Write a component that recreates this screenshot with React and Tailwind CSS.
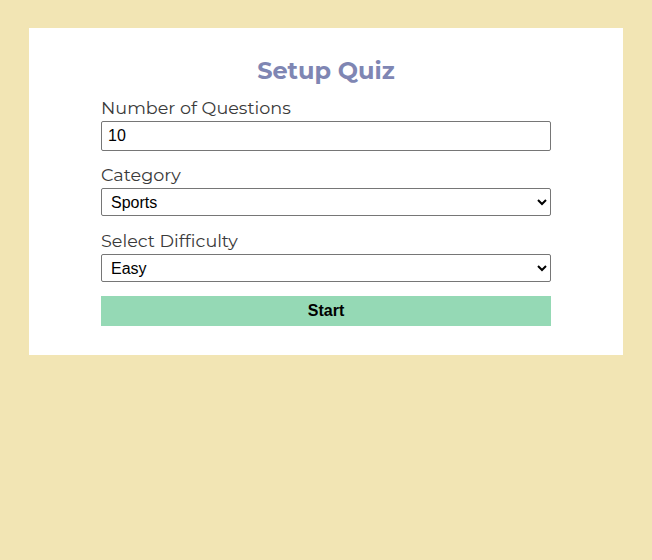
export default function App() {
  const label = "text-[17.6px] leading-[22px] text-[#3a3a3a] font-['Montserrat','Open_Sans',sans-serif]";
  const field = "mt-[2px] w-full border border-[#767676] rounded-[2px] text-[16px] text-black bg-white font-['Liberation_Sans',Arial,sans-serif]";
  return (
    <div className="min-h-[560px] w-full bg-[#f2e5b4] pt-[28px] px-[29px]">
      <div className="bg-white pt-[28px] pb-[29px]">
        <h1 className="text-center text-[24px] leading-[30px] font-bold text-[#7f86b3] font-['Montserrat','Open_Sans',sans-serif]">
          Setup Quiz
        </h1>
        <div className="mx-auto w-[450px] flex flex-col">
          <label className={"mt-[11px] " + label}>Number of Questions</label>
          <input
            type="number"
            defaultValue="10"
            className={field + " h-[30px] px-[6px] outline-none"}
          />
          <label className={"mt-[13px] " + label}>Category</label>
          <select defaultValue="sports" className={field + " h-[28px] pl-[5px]"}>
            <option value="sports">Sports</option>
            <option value="history">History</option>
            <option value="politics">Politics</option>
          </select>
          <label className={"mt-[14px] " + label}>Select Difficulty</label>
          <select defaultValue="easy" className={field + " h-[28px] pl-[5px]"}>
            <option value="easy">Easy</option>
            <option value="medium">Medium</option>
            <option value="hard">Hard</option>
          </select>
          <button className="mt-[14px] h-[30px] w-full bg-[#95d9b5] text-[16px] font-bold text-black font-['Liberation_Sans',Arial,sans-serif]">
            Start
          </button>
        </div>
      </div>
    </div>
  );
}
